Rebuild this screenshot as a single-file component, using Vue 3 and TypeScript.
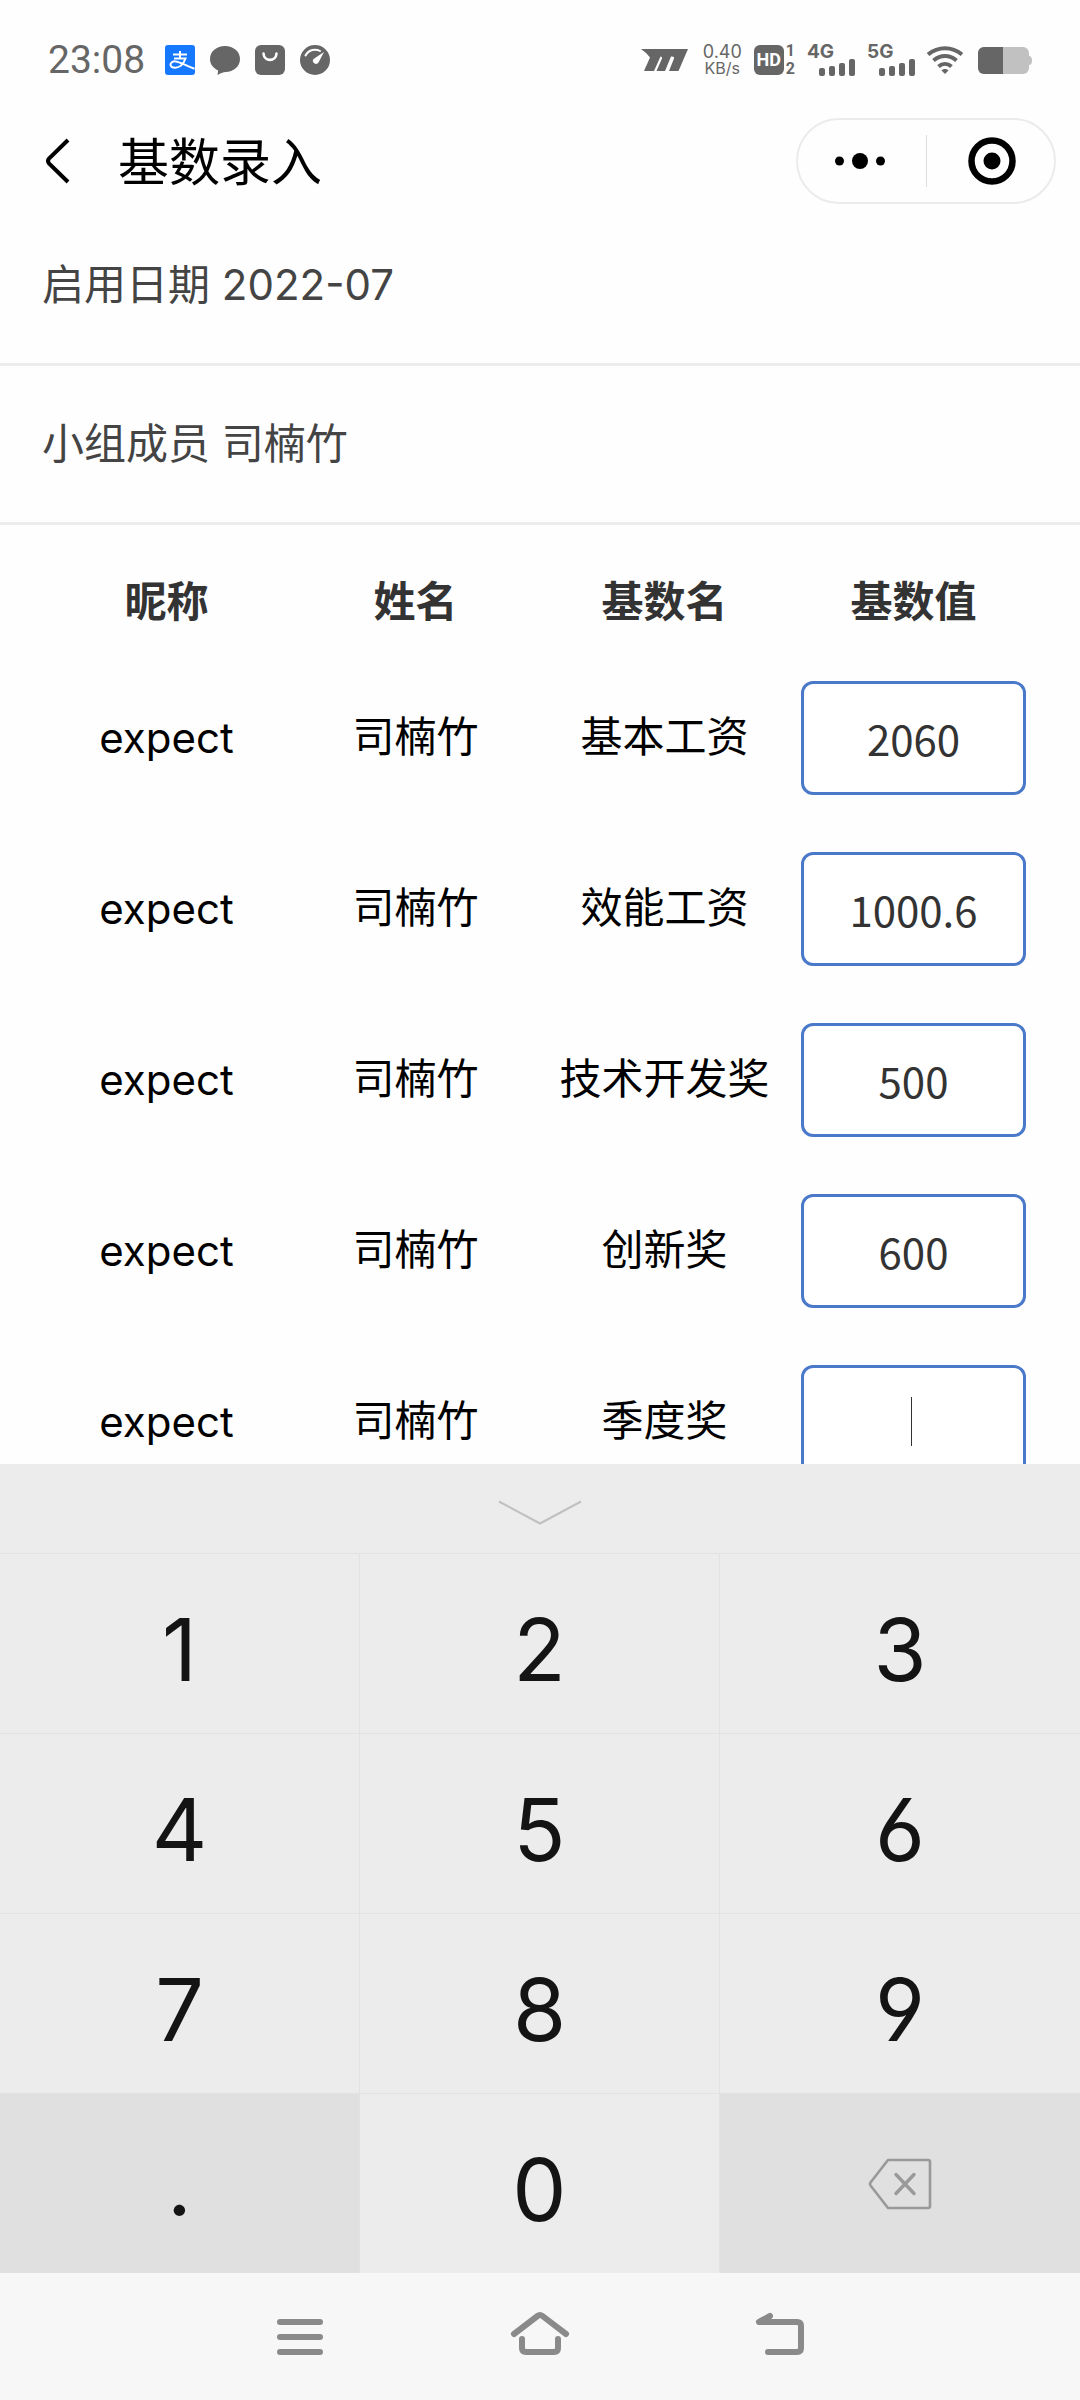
<script setup lang="ts">
import { ref } from 'vue'

interface Row {
  nick: string
  name: string
  item: string
  value: string
}

const rows = ref<Row[]>([
  { nick: 'expect', name: '司楠竹', item: '基本工资', value: '2060' },
  { nick: 'expect', name: '司楠竹', item: '效能工资', value: '1000.6' },
  { nick: 'expect', name: '司楠竹', item: '技术开发奖', value: '500' },
  { nick: 'expect', name: '司楠竹', item: '创新奖', value: '600' },
  { nick: 'expect', name: '司楠竹', item: '季度奖', value: '' },
])

const active = ref(4)
const keys = ['1', '2', '3', '4', '5', '6', '7', '8', '9', '.', '0']

function press(key: string) {
  rows.value[active.value].value += key
}
function erase() {
  const row = rows.value[active.value]
  row.value = row.value.slice(0, -1)
}
</script>

<template>
  <div class="screen">
    <header class="status">
      <div class="status-left">
        <span class="clock">23:08</span>
        <svg width="30" height="30" viewBox="0 0 30 30">
          <rect width="30" height="30" rx="3" fill="#1677ff" />
          <g fill="none" stroke="#fff" stroke-width="2">
            <path d="M8 9.500h14M15 6v7.500M9 13.500h11.500c-1.500 4-5 9-10 9.200c-3 0-5-1.200-5-3.200c0-2.300 2.500-3.300 5-3.100c5 .4 10 4.500 19 7.300" />
          </g>
        </svg>
        <svg width="30" height="30" viewBox="0 0 30 30">
          <path d="M15 1c8.500 0 15 5.500 15 13s-6.500 13-14.500 13c-2 0-4 .8-8 3l.6-4.500C3 23 0 19 0 14C0 6.500 6.500 1 15 1z" fill="#666" />
        </svg>
        <svg width="30" height="30" viewBox="0 0 30 30">
          <rect width="30" height="30" rx="6" fill="#666" />
          <path d="M8.500 8.500c.5 8.500 12.500 8.500 13 0" fill="none" stroke="#fff" stroke-width="2.600" stroke-linecap="round" />
        </svg>
        <svg width="30" height="30" viewBox="0 0 30 30">
          <circle cx="15" cy="15" r="15" fill="#666" />
          <path d="M5.500 10.500C9 4.500 15.500 3.500 20 6" fill="none" stroke="#fff" stroke-width="2" stroke-linecap="round" />
          <path d="M24 7l-5.500 10.500a3 3 0 0 1-5-3.500z" fill="#fff" />
        </svg>
      </div>
      <div class="status-right">
        <svg width="47" height="22" viewBox="0 0 47 22">
          <path d="M0 0H47L37.500 22H28L33 9.500q.5-2-2-2H30L24 22H15.500L21 9.500q.5-2-1.500-2L13 22H3L9 8.500Q6 4 0 0z" fill="#666" />
        </svg>
        <span class="speed"><span>0.40</span><span class="unit">KB/s</span></span>
        <span class="hd">
          <b class="hd-box">HD</b>
          <span class="sims"><b>1</b><b>2</b></span>
        </span>
        <span v-for="net in ['4G', '5G']" :key="net" class="net">
          <b>{{ net }}</b>
          <svg width="36" height="17" viewBox="0 0 36 17" fill="#666">
            <rect y="9" width="6" height="8" rx="2" />
            <rect x="10" y="7" width="6" height="10" rx="2" />
            <rect x="20" y="4" width="6" height="13" rx="2" />
            <rect x="30" width="6" height="17" rx="2" />
          </svg>
        </span>
        <svg width="36" height="28" viewBox="0 0 36 28">
          <g fill="none" stroke="#666" stroke-width="4">
            <path d="M1 8.500c10-8.500 24-8.500 34 0" />
            <path d="M6.500 14.500c7-6 16-6 23 0" />
            <path d="M11.500 20.500c4-3.500 9-3.500 13 0" />
          </g>
          <path d="M14.500 24.500c2-2 5-2 7 0L18 28z" fill="#666" />
        </svg>
        <svg class="battery" width="54" height="27" viewBox="0 0 54 27">
          <rect width="51" height="27" rx="6" fill="#c1c1c1" />
          <path d="M51 9q3 0 3 4.500t-3 4.500z" fill="#c1c1c1" />
          <path d="M6 0H25V27H6a6 6 0 0 1-6-6V6a6 6 0 0 1 6-6z" fill="#666" />
        </svg>
      </div>
    </header>

    <nav class="titlebar">
      <button class="plain back" aria-label="返回">
        <svg width="26" height="46" viewBox="0 0 26 46">
          <path d="M24 2L5 20.500q-2 2.500 0 5L24 44" fill="none" stroke="#000" stroke-width="4" />
        </svg>
      </button>
      <h1>基数录入</h1>
      <div class="capsule">
        <button class="plain more" aria-label="更多">
          <svg width="52" height="48" viewBox="0 0 52 48">
            <circle cx="5.500" cy="24" r="4.500" /><circle cx="26" cy="24" r="8" /><circle cx="46.500" cy="24" r="4.500" />
          </svg>
        </button>
        <i class="split"></i>
        <button class="plain close" aria-label="关闭">
          <svg width="48" height="48" viewBox="0 0 48 48">
            <circle cx="24" cy="24" r="20.500" fill="none" stroke="#000" stroke-width="6.500" /><circle cx="24" cy="24" r="8.500" />
          </svg>
        </button>
      </div>
    </nav>

    <main class="content">
      <p class="info">启用日期 2022-07</p>
      <p class="info">小组成员 司楠竹</p>
      <table>
        <thead>
          <tr><th>昵称</th><th>姓名</th><th>基数名</th><th>基数值</th></tr>
        </thead>
        <tbody>
          <tr v-for="(row, i) in rows" :key="row.item">
            <td>{{ row.nick }}</td>
            <td class="han">{{ row.name }}</td>
            <td class="han">{{ row.item }}</td>
            <td>
              <div class="field">
                <input v-model="row.value" type="text" inputmode="decimal" :aria-label="row.item" @focus="active = i" />
                <i v-if="i === active && !row.value" class="caret"></i>
              </div>
            </td>
          </tr>
        </tbody>
      </table>
    </main>

    <section class="keyboard">
      <button class="plain collapse" aria-label="收起键盘">
        <svg width="84" height="26" viewBox="0 0 84 26">
          <path d="M1 1.500L42 23.500L83 1.500" fill="none" stroke="#c0c0c0" stroke-width="2" />
        </svg>
      </button>
      <div class="keys">
        <button v-for="key in keys" :key="key" class="plain key" :class="{ dark: key === '.' }" @click="press(key)">{{ key }}</button>
        <button class="plain key dark" aria-label="删除" @click="erase">
          <svg width="64" height="52" viewBox="0 0 64 52" fill="none" stroke="#999" stroke-linejoin="round" stroke-linecap="round">
            <path d="M20 2H60q2 0 2 2V48q0 2-2 2H20L2.500 27.500q-1-1.500 0-3z" stroke-width="2.600" />
            <path d="M28 16.500L46 35.500M46 16.500L28 35.500" stroke-width="3.400" />
          </svg>
        </button>
      </div>
    </section>

    <footer class="sysnav">
      <button class="plain" aria-label="任务">
        <svg width="60" height="48" viewBox="0 0 60 48"><path d="M10 12h40M10 27h40M10 42h40" /></svg>
      </button>
      <button class="plain" aria-label="主页">
        <svg width="60" height="48" viewBox="0 0 60 48"><path d="M4 24L27.500 6q2.500-2 5 0L56 24M12 29v9q0 4 4 4H44q4 0 4-4v-9" /></svg>
      </button>
      <button class="plain" aria-label="后退">
        <svg width="60" height="48" viewBox="0 0 60 48"><path d="M20 6L9 12H47q4 0 4 4V38q0 4-4 4H18" /></svg>
      </button>
    </footer>
  </div>
</template>

<style>
body {
  background: #fff;
}
</style>

<style scoped>
.screen {
  height: 100vh;
  display: flex;
  flex-direction: column;
  overflow: hidden;
  background: #fefefe;
  color: #000;
  font-family: "Inter", "Noto Sans CJK SC", sans-serif;
}
.plain {
  appearance: none;
  border: 0;
  padding: 0;
  margin: 0;
  background: none;
  color: inherit;
  font: inherit;
  display: flex;
  align-items: center;
  justify-content: center;
}
svg {
  display: block;
  flex: none;
}
.status {
  flex: none;
  height: 118px;
  box-sizing: border-box;
  padding: 2px 48px 0;
  display: flex;
  align-items: center;
  justify-content: space-between;
  color: #666;
  font-family: Roboto, sans-serif;
}
.status-left {
  display: flex;
  align-items: center;
  gap: 15px;
}
.clock {
  font-size: 39px;
  line-height: 48px;
  margin-right: 5px;
}
.status-right {
  display: flex;
  align-items: center;
  gap: 12px;
}
.speed {
  display: flex;
  flex-direction: column;
  align-items: center;
  margin-left: 3px;
  font-family: Inter, sans-serif;
  font-size: 18px;
  line-height: 17px;
}
.unit {
  font-size: 16px;
}
.hd,
.sims {
  display: flex;
}
.hd {
  align-items: center;
  gap: 2px;
}
.hd-box {
  width: 30px;
  height: 30px;
  border-radius: 6px;
  background: #666;
  color: #fff;
  font-size: 18px;
  line-height: 30px;
  text-align: center;
}
.sims {
  flex-direction: column;
  font-size: 16px;
  line-height: 18px;
}
.net {
  width: 48px;
  height: 30px;
  display: flex;
  flex-direction: column;
  font-family: Inter, sans-serif;
  font-size: 19px;
  line-height: 14px;
}
.net svg {
  align-self: flex-end;
}
.battery {
  margin-left: 3px;
}
.titlebar {
  flex: none;
  height: 86px;
  padding: 0 24px 0 44px;
  display: flex;
  align-items: center;
}
.back {
  width: 74px;
  justify-content: flex-start;
}
h1 {
  flex: 1;
  margin: 0;
  padding-top: 4px;
  font-size: 51px;
  line-height: 60px;
  font-weight: 400;
}
.capsule {
  width: 260px;
  height: 86px;
  box-sizing: border-box;
  border: 2px solid #ebebeb;
  border-radius: 43px;
  display: flex;
  align-items: center;
}
.capsule button {
  flex: 1;
}
.capsule .more {
  padding-right: 4px;
}
.capsule .close {
  padding-left: 4px;
}
.split {
  width: 1px;
  height: 52px;
  background: #ddd;
}
.content {
  flex: 1;
  min-height: 0;
  overflow: hidden;
  padding-top: 3px;
  font-size: 42px;
}
.info {
  margin: 0;
  height: 159px;
  box-sizing: border-box;
  padding: 0 42px;
  border-bottom: 3px solid #ececec;
  line-height: 156px;
  color: #444;
}
table {
  width: calc(100% - 84px);
  margin: 24px 42px 0;
  table-layout: fixed;
  border-collapse: collapse;
}
th,
td {
  padding: 0;
  text-align: center;
  white-space: nowrap;
}
th {
  height: 99px;
  padding-bottom: 4px;
  color: #333;
}
td {
  height: 171px;
}
.han {
  height: 163px;
  padding-bottom: 8px;
}
.field {
  position: relative;
  margin: 0 12px;
}
input {
  display: block;
  width: 100%;
  height: 114px;
  box-sizing: border-box;
  border: 3px solid #4b79c9;
  border-radius: 12px;
  padding: 0;
  background: #fff;
  color: #333;
  font-family: "Noto Sans CJK SC", sans-serif;
  font-size: 42px;
  text-align: center;
  outline: none;
}
.caret {
  position: absolute;
  left: 49%;
  top: 32px;
  width: 1px;
  height: 49px;
  background: #333;
}
.keyboard {
  flex: none;
  background: #ececec;
  color: #141414;
}
.collapse {
  width: 100%;
  height: 89px;
  padding-top: 8px;
}
.keys {
  display: grid;
  grid-template-columns: repeat(3, 1fr);
}
.key {
  height: 180px;
  padding-top: 12px;
  border-top: 1px solid #e2e2e2;
  border-right: 1px solid #e2e2e2;
  font-size: 86px;
  font-feature-settings: "cv03", "cv04";
}
.key:nth-child(3n) {
  border-right: 0;
}
.dark {
  padding-top: 0;
  background: #e0e0e0;
}
.sysnav {
  flex: none;
  height: 127px;
  box-sizing: border-box;
  padding-bottom: 6px;
  background: #f7f7f7;
  display: flex;
  justify-content: center;
  align-items: center;
  gap: 180px;
}
.sysnav path {
  fill: none;
  stroke: #8a8a8a;
  stroke-width: 6;
  stroke-linecap: round;
  stroke-linejoin: round;
}
</style>
